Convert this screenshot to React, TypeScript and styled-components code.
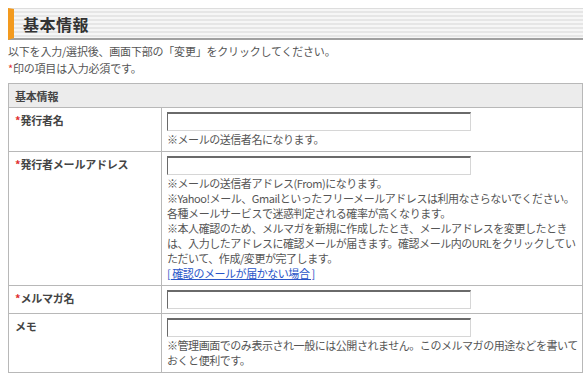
import styled, { createGlobalStyle } from "styled-components";

const GlobalStyle = createGlobalStyle`
    body {
        margin: 0;
        background: #ffffff;
        font-family: "Noto Sans CJK JP", "Noto Sans", sans-serif;
        color: #555555;
        font-size: 11px;
        letter-spacing: -0.2px;
    }
`

const Page = styled.div`
    padding: 8px 5px 0 8px;
`

const Heading = styled.h2`
    margin: 0;
    height: 29px;
    display: flex;
    align-items: center;
    padding-left: 9px;
    border-top: 1px solid #dddddd;
    border-bottom: 2px solid #a0a0a0;
    border-left: 6px solid #f39a1e;
    background: repeating-linear-gradient(#f6f6f6 0 2px, #e6e6e6 2px 4px);
    font-size: 16px;
    font-weight: 700;
    color: #333333;
    letter-spacing: 0.5px;
`

const Intro = styled.p`
    margin: 3px 0 0;
    line-height: 17px;
`

const Required = styled.span`
    color: #e03030;
`

const FormTable = styled.table`
    margin-top: 6px;
    width: 575px;
    table-layout: fixed;
    border-collapse: collapse;
    border: 1px solid #b8b8b8;
`

const LabelCol = styled.col`
    width: 153px;
`

const Caption = styled.th`
    background: #ececec;
    text-align: left;
    font-weight: 700;
    font-size: 11px;
    color: #444444;
    height: 23px;
    padding: 0 6px;
    border-bottom: 1px solid #b8b8b8;
`

const Row = styled.tr`
    border-bottom: 1px solid #b8b8b8;
`

const Label = styled.th`
    padding: 5px 6px;
    text-align: left;
    vertical-align: top;
    font-size: 11px;
    font-weight: 700;
    color: #444444;
    line-height: 15px;
    white-space: nowrap;
    border-right: 1px solid #b8b8b8;
`

const Field = styled.td`
    padding: 4px 5px;
    vertical-align: top;
    line-height: 15px;
`

const TextInput = styled.input`
    display: block;
    box-sizing: border-box;
    width: 304px;
    height: 19px;
    margin: 0;
    padding: 0 2px;
    border-top: 2px solid #6a6a6a;
    border-left: 1px solid #6a6a6a;
    border-right: 1px solid #d6d6d6;
    border-bottom: 1px solid #d6d6d6;
    background: #ffffff;
    outline: none;
`

const Note = styled.div`
    margin-top: 1px;
    line-height: 15px;
    white-space: pre;
    letter-spacing: -0.45px;
`

const HelpLink = styled.a`
    color: #2a55c8;
    text-decoration: underline;
`

type FormRowProps = {
    label: string
    required?: boolean
    children?: React.ReactNode
}

const FormRow = (props: FormRowProps) => {
    return (
        <Row>
            <Label>
                {props.required && <Required>*</Required>}
                {props.label}
            </Label>
            <Field>
                <TextInput type="text"/>
                {props.children && <Note>{props.children}</Note>}
            </Field>
        </Row>
    );
};

export default function App() {
    return (
        <Page>
            <GlobalStyle/>
            <Heading>基本情報</Heading>
            <Intro>
                以下を入力/選択後、画面下部の「変更」をクリックしてください。<br/>
                <Required>*</Required>印の項目は入力必須です。
            </Intro>
            <FormTable>
                <colgroup>
                    <LabelCol/>
                    <col/>
                </colgroup>
                <thead>
                <tr>
                    <Caption colSpan={2}>基本情報</Caption>
                </tr>
                </thead>
                <tbody>
                <FormRow label="発行者名" required>
                    {"※メールの送信者名になります。"}
                </FormRow>
                <FormRow label="発行者メールアドレス" required>
                    {"※メールの送信者アドレス(From)になります。\n"}
                    {"※Yahoo!メール、Gmailといったフリーメールアドレスは利用なさらないでください。\n"}
                    {"各種メールサービスで迷惑判定される確率が高くなります。\n"}
                    {"※本人確認のため、メルマガを新規に作成したとき、メールアドレスを変更したとき\n"}
                    {"は、入力したアドレスに確認メールが届きます。確認メール内のURLをクリックしてい\n"}
                    {"ただいて、作成/変更が完了します。\n"}
                    <HelpLink href="#">{"[ 確認のメールが届かない場合 ]"}</HelpLink>
                </FormRow>
                <FormRow label="メルマガ名" required/>
                <FormRow label="メモ">
                    {"※管理画面でのみ表示され一般には公開されません。このメルマガの用途などを書いて\n"}
                    {"おくと便利です。"}
                </FormRow>
                </tbody>
            </FormTable>
        </Page>
    );
}
